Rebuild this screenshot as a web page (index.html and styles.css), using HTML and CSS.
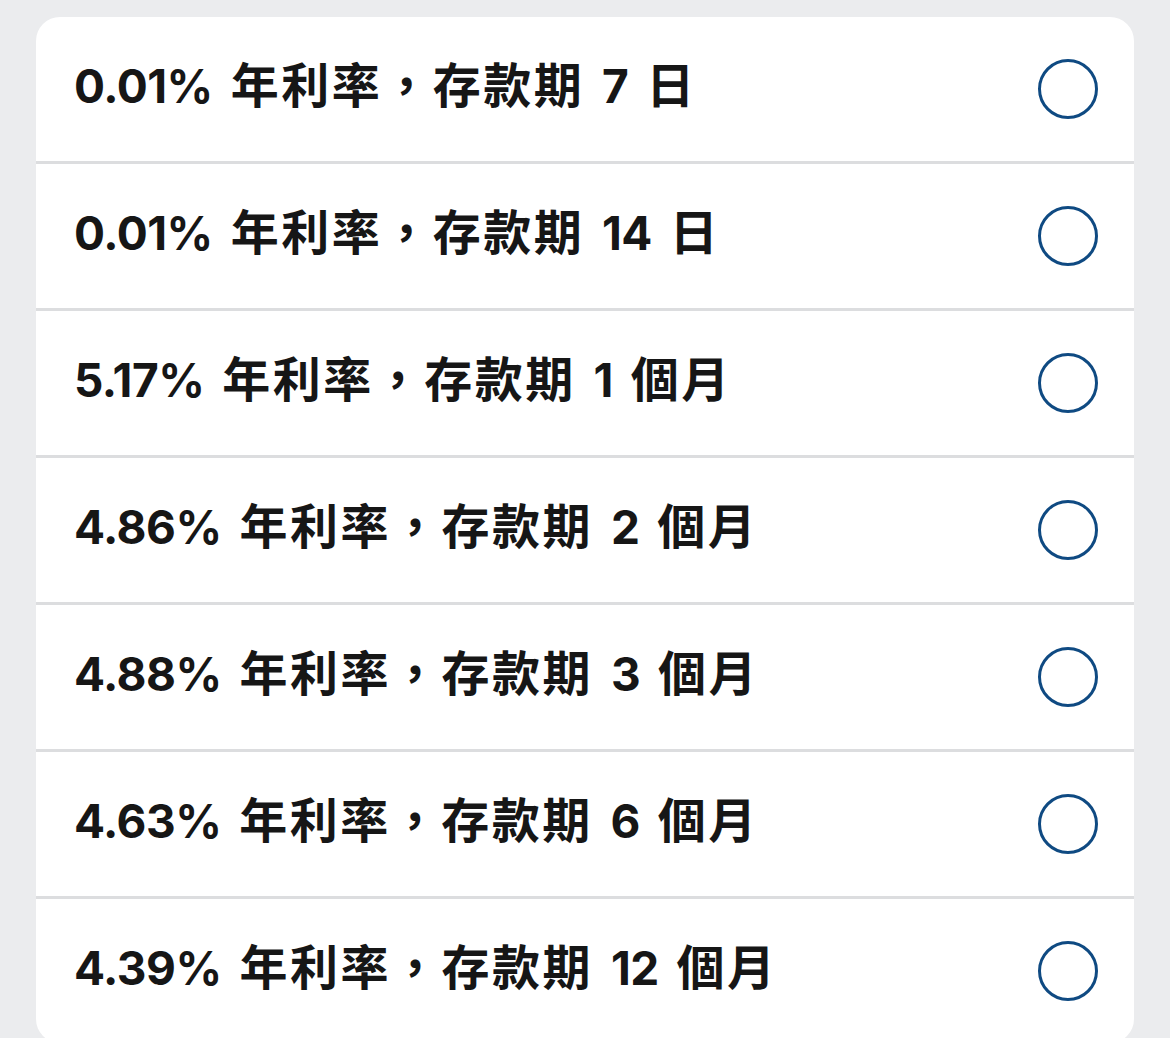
FILE: index.html
```html
<!DOCTYPE html>
<html lang="zh-HK">
<head>
    <meta charset="UTF-8">
    <meta name="viewport" content="width=device-width, initial-scale=1.0">
    <title>定期存款</title>
    <link rel="stylesheet" href="styles.css">
</head>
<body>
    <div class="options">
        <label class="option"><span class="text"><span class="num">0.01%</span> 年利率，存款期 <span class="num">7</span> 日</span><span class="radio"></span></label>
        <label class="option"><span class="text"><span class="num">0.01%</span> 年利率，存款期 <span class="num">14</span> 日</span><span class="radio"></span></label>
        <label class="option"><span class="text"><span class="num">5.17%</span> 年利率，存款期 <span class="num">1</span> 個月</span><span class="radio"></span></label>
        <label class="option"><span class="text"><span class="num">4.86%</span> 年利率，存款期 <span class="num">2</span> 個月</span><span class="radio"></span></label>
        <label class="option"><span class="text"><span class="num">4.88%</span> 年利率，存款期 <span class="num">3</span> 個月</span><span class="radio"></span></label>
        <label class="option"><span class="text"><span class="num">4.63%</span> 年利率，存款期 <span class="num">6</span> 個月</span><span class="radio"></span></label>
        <label class="option"><span class="text"><span class="num">4.39%</span> 年利率，存款期 <span class="num">12</span> 個月</span><span class="radio"></span></label>
    </div>
</body>
</html>
```

FILE: styles.css
```css
body {
    margin: 0;
    padding: 17px 36px 0 36px;
    background-color: #ebecee;
    font-family: Inter, "Noto Sans CJK TC", sans-serif;
    height: 1038px;
    box-sizing: border-box;
    overflow: hidden;
}
.options {
    background-color: #fff;
    border-radius: 24px;
    overflow: hidden;
}
.option {
    display: flex;
    align-items: center;
    justify-content: space-between;
    height: 144px;
    padding: 0 36px 0 38px;
    border-bottom: 3px solid #dcdddf;
    cursor: pointer;
}
.option:last-child {
    border-bottom: none;
}
.text {
    margin-top: -14px;
    font-size: 48px;
    font-weight: 700;
    letter-spacing: 2.5px;
    word-spacing: 4px;
    color: #161616;
}
.num {
    font-size: 46px;
    letter-spacing: -0.5px;
    font-variant-numeric: proportional-nums;
}
.radio {
    width: 54px;
    height: 54px;
    border: 3px solid #0f4a82;
    border-radius: 50%;
}
```
